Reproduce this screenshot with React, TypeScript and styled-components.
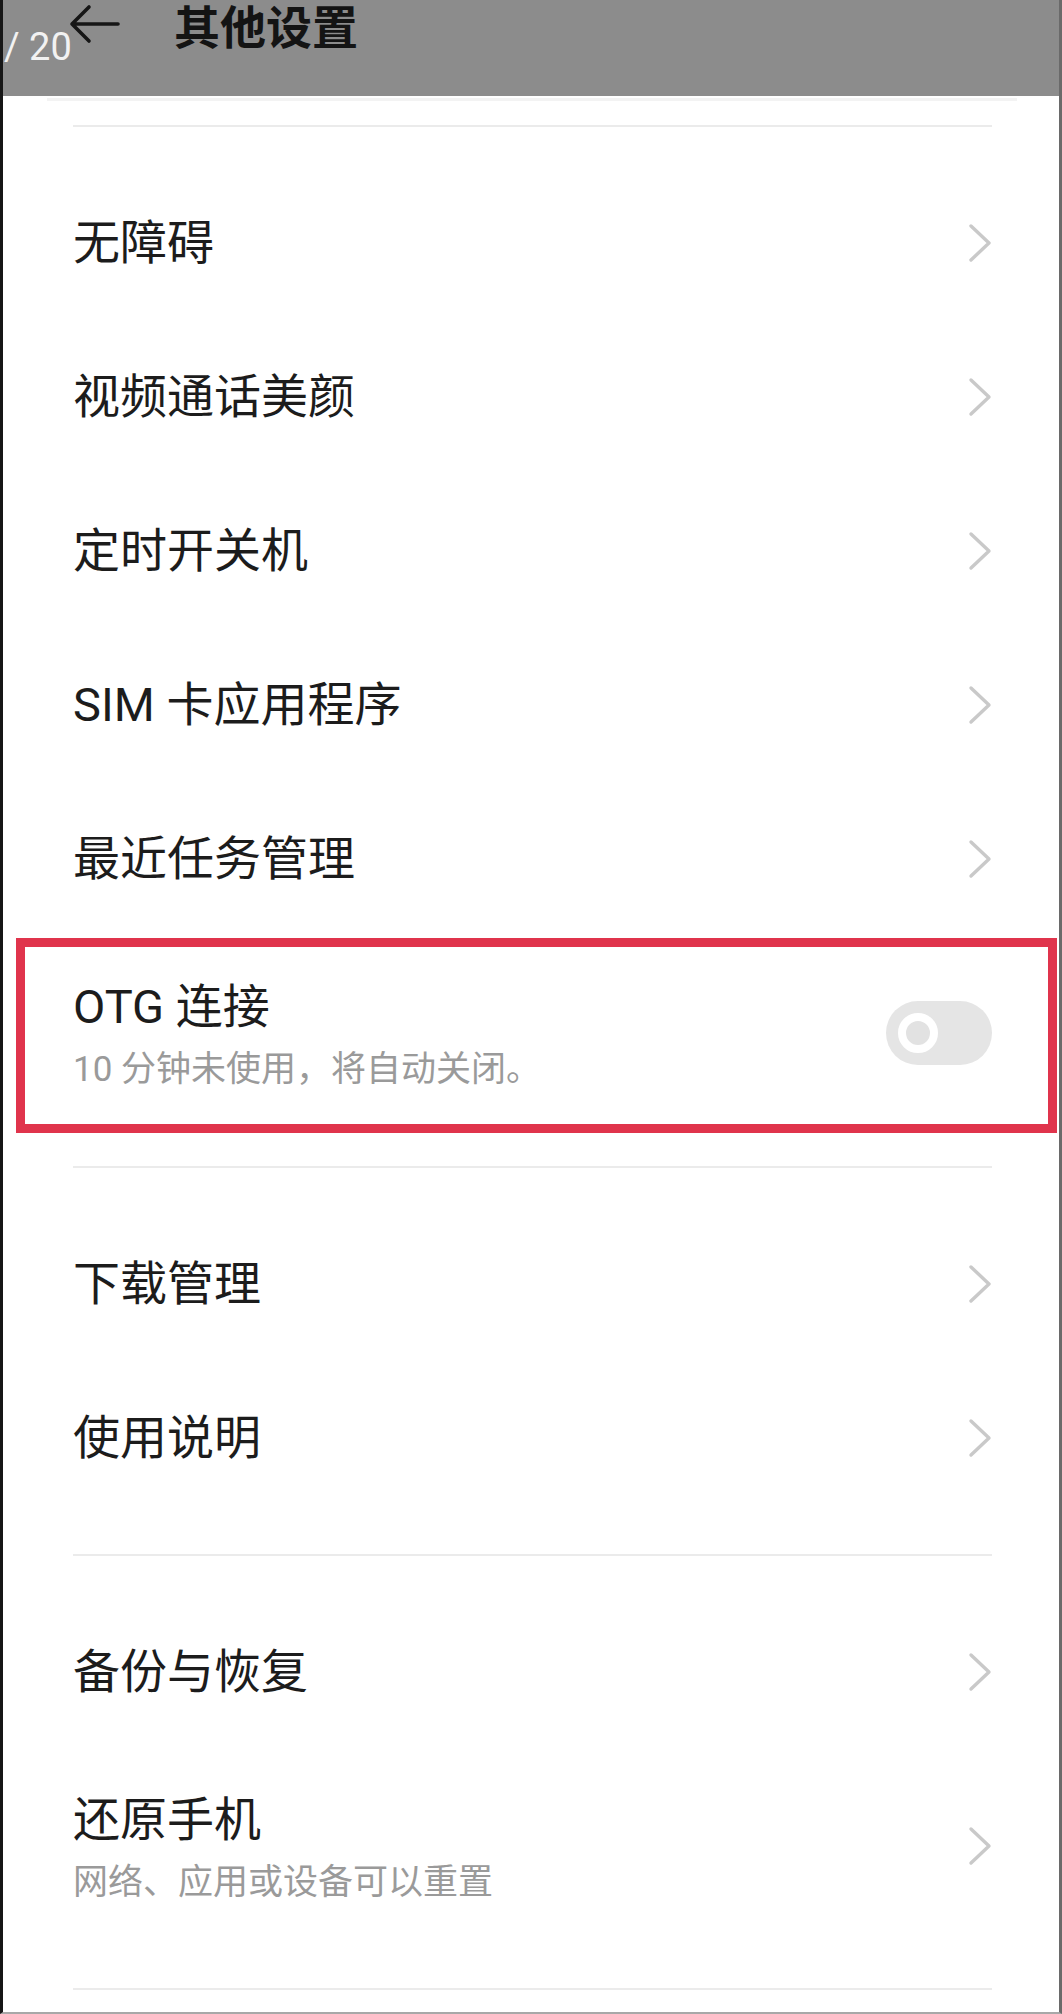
import React from "react";
import styled, { createGlobalStyle } from "styled-components";

const GlobalStyle = createGlobalStyle`
  html, body {
    margin: 0;
    padding: 0;
    background: #ffffff;
  }
  body {
    font-family: Roboto, "Noto Sans CJK SC", sans-serif;
  }
`;

const Frame = styled.div`
  position: relative;
  width: 1062px;
  height: 2014px;
  box-sizing: border-box;
  border-left: 3px solid #161616;
  border-right: 3px solid #6a6a6a;
  border-bottom: 2px solid #a8a8a8;
  background: #ffffff;
  overflow: hidden;
  font-family: Roboto, "Noto Sans CJK SC", sans-serif;
`;

const TitleBar = styled.header`
  position: relative;
  display: flex;
  align-items: center;
  gap: 54px;
  height: 96px;
  padding: 0 0 48px 65px;
  box-sizing: border-box;
  background: #8c8c8c;
`;

const Title = styled.h1`
  margin: 0;
  font-size: 46px;
  line-height: 48px;
  font-weight: 600;
  color: #141414;
  font-family: "Noto Sans CJK SC", sans-serif;
`;

const PageCounter = styled.span`
  position: absolute;
  left: 1px;
  top: 28px;
  font-family: Roboto, sans-serif;
  font-size: 38px;
  line-height: 38px;
  color: #f2f2f2;
  white-space: pre;
`;

const HeaderShade = styled.div`
  height: 3px;
  margin: 2px 42px 0 44px;
  background: #f3f3f3;
`;

const Divider = styled.div<{ $top?: number }>`
  height: 2px;
  margin: ${(p) => p.$top ?? 0}px 67px 0 70px;
  background: #ebebeb;
`;

const Section = styled.section<{ $bottom: number }>`
  display: flex;
  flex-direction: column;
  padding: 39px 0 ${(p) => p.$bottom}px;
`;

const Row = styled.div<{ $tall?: boolean }>`
  position: relative;
  display: flex;
  align-items: center;
  justify-content: space-between;
  height: ${(p) => (p.$tall ? 194 : 154)}px;
  padding: 0 67px 0 70px;
  box-sizing: border-box;
`;

const TextBlock = styled.div<{ $tall?: boolean }>`
  display: flex;
  flex-direction: column;
  margin-top: ${(p) => (p.$tall ? 3 : 0)}px;
`;

const RowTitle = styled.span`
  font-size: 47px;
  line-height: 60px;
  color: #1c1c1c;
  white-space: pre;
`;

const RowSub = styled.span`
  margin-top: 11px;
  font-size: 35px;
  line-height: 44px;
  color: #9a9a9a;
  white-space: pre;
`;

const Track = styled.div`
  display: flex;
  align-items: center;
  width: 106px;
  height: 64px;
  padding-left: 12px;
  box-sizing: border-box;
  border-radius: 32px;
  background: #e5e5e5;
`;

const Knob = styled.div`
  width: 40px;
  height: 40px;
  box-sizing: border-box;
  border-radius: 50%;
  border: 8px solid #ffffff;
  background: #e2e2e2;
`;

const Highlight = styled.div`
  position: absolute;
  top: 2px;
  bottom: -3px;
  left: 13px;
  right: 2px;
  border: 9px solid #e0344c;
  pointer-events: none;
`;

const BackArrow = () => (
  <svg width="52" height="40" viewBox="0 0 52 40" fill="none">
    <path
      d="M4 20 H50 M21 3 L4 20 L21 37"
      stroke="#161616"
      strokeWidth="3.6"
      strokeLinecap="round"
      strokeLinejoin="round"
    />
  </svg>
);

const Chevron = () => (
  <svg width="24" height="40" viewBox="0 0 24 40" fill="none">
    <path
      d="M3 3 L21 20 L3 37"
      stroke="#c9c9c9"
      strokeWidth="3.4"
      strokeLinecap="round"
      strokeLinejoin="round"
    />
  </svg>
);

type Item = { title: string; sub?: string; toggle?: boolean; highlight?: boolean };

const sections: { bottom: number; items: Item[] }[] = [
  {
    bottom: 36,
    items: [
      { title: "无障碍" },
      { title: "视频通话美颜" },
      { title: "定时开关机" },
      { title: "SIM 卡应用程序" },
      { title: "最近任务管理" },
      { title: "OTG 连接", sub: "10 分钟未使用，将自动关闭。", toggle: true, highlight: true },
    ],
  },
  {
    bottom: 39,
    items: [{ title: "下载管理" }, { title: "使用说明" }],
  },
  {
    bottom: 45,
    items: [{ title: "备份与恢复" }, { title: "还原手机", sub: "网络、应用或设备可以重置" }],
  },
];

const SettingRow = ({ item }: { item: Item }) => {
  const tall = !!item.sub;
  return (
    <Row $tall={tall}>
      <TextBlock $tall={tall}>
        <RowTitle>{item.title}</RowTitle>
        {item.sub && <RowSub>{item.sub}</RowSub>}
      </TextBlock>
      {item.toggle ? (
        <Track>
          <Knob />
        </Track>
      ) : (
        <Chevron />
      )}
      {item.highlight && <Highlight />}
    </Row>
  );
};

export default function App() {
  return (
    <>
      <GlobalStyle />
      <Frame>
        <TitleBar>
          <BackArrow />
          <Title>其他设置</Title>
          <PageCounter>/ 20</PageCounter>
        </TitleBar>
        <HeaderShade />
        {sections.map((s, i) => (
          <React.Fragment key={i}>
            <Divider $top={i === 0 ? 24 : 0} />
            <Section $bottom={s.bottom}>
              {s.items.map((it) => (
                <SettingRow key={it.title} item={it} />
              ))}
            </Section>
          </React.Fragment>
        ))}
        <Divider />
      </Frame>
    </>
  );
}
